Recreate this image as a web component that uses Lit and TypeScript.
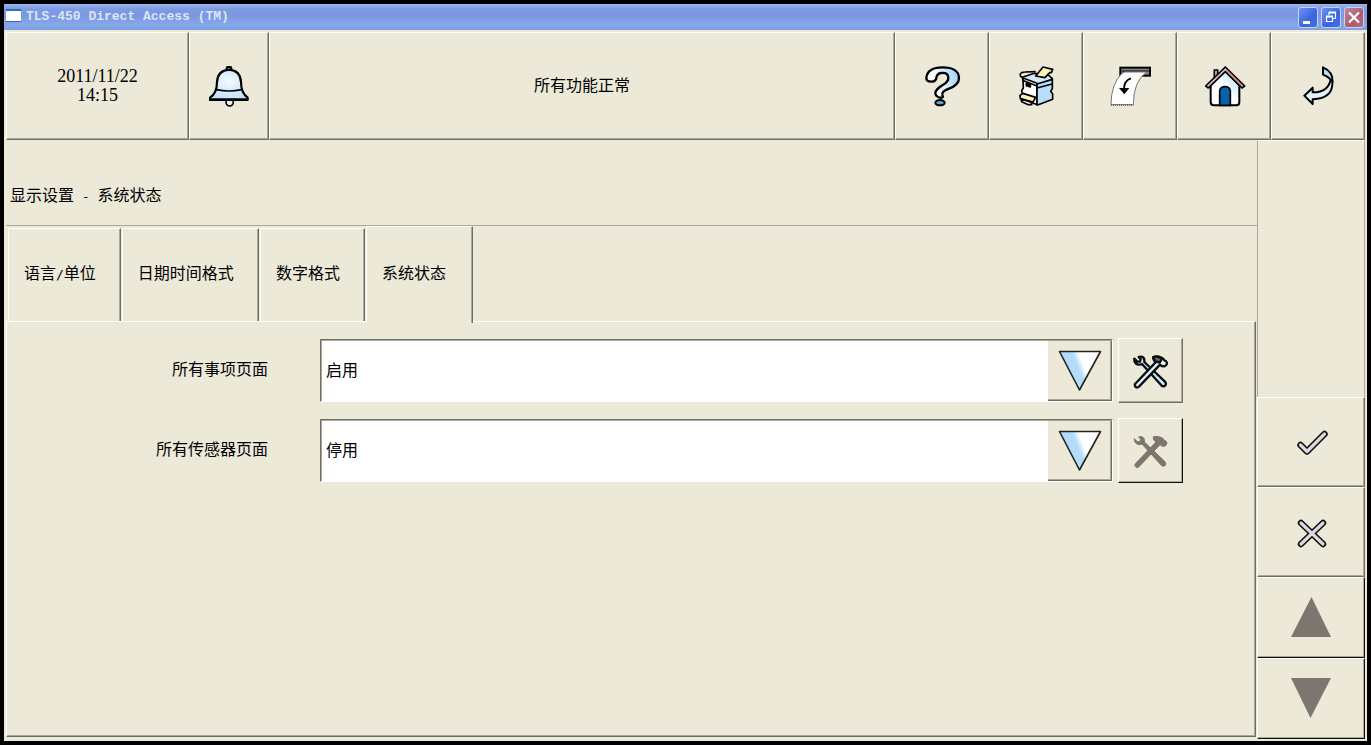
import { LitElement, html, css, svg } from "lit";
import { customElement, state } from "lit/decorators.js";

const bell = svg`<svg width="40" height="41" viewBox="0 0 120 123" aria-hidden="true">
  <defs><radialGradient id="bg" cx=".5" cy=".4" r=".6"><stop offset="0" stop-color="#f4faff"/><stop offset="1" stop-color="#c3e0fb"/></radialGradient></defs>
  <circle cx="62" cy="109" r="11" fill="#e3f1fd" stroke="#000" stroke-width="5"/>
  <rect x="53" y="3" width="14" height="14" rx="3" fill="#8bb" stroke="#000" stroke-width="6"/>
  <path d="M60 11C36 13 25 28 24 48C24 68 21 84 3 95V102H116V95C101 84 96 68 96 48C95 28 84 13 60 11Z" fill="url(#bg)" stroke="#000" stroke-width="6.500" stroke-linejoin="round"/>
  <path d="M22 71Q60 79 98 71" fill="none" stroke="#000" stroke-width="5"/>
  <path d="M2 101H117" stroke="#000" stroke-width="8"/></svg>`;

const help = svg`<svg width="36" height="41" viewBox="0 0 108 123" aria-hidden="true">
  <defs><linearGradient id="qg" x1="0" y1=".6" x2="1" y2=".3"><stop offset=".3" stop-color="#fff"/><stop offset="1" stop-color="#9dd2fb"/></linearGradient></defs>
  <path d="M4 36C6 14 26 4 53 4C84 4 102 16 102 36C102 54 88 62 72 68C56 74 51 80 52 86C53 91 56 94 50 95C42 96 31 90 31 82C31 72 40 66 52 58C66 50 71 44 70 34C69 24 60 20 49 21C37 22 35 28 34 36C33 43 26 47 18 47C9 47 4 43 4 36Z" fill="url(#qg)" stroke="#000" stroke-width="7" stroke-linejoin="round"/>
  <ellipse cx="45" cy="110" rx="14" ry="8" fill="#5aa3dc" stroke="#000" stroke-width="6"/></svg>`;

const printer = svg`<svg width="36" height="41" viewBox="0 0 108 123" aria-hidden="true">
  <g stroke="#000" stroke-width="5" stroke-linejoin="round">
  <path d="M10 34Q2 32 4 24Q7 18 18 18L50 17" fill="none"/>
  <path d="M10 34L46 22L88 27L100 38L96 50L54 58L12 44Z" fill="#d5ebfc"/>
  <path d="M12 36L54 52V116L14 98L8 74L13 66Z" fill="#fff"/>
  <path d="M54 54L100 40V68L95 76L101 84V100L58 116H54Z" fill="#b9defa"/>
  <path d="M54 66L99 54M14 44L54 60" fill="none"/>
  <path d="M50 30L72 3L101 10L97 20H92L78 35Z" fill="#fdf0b8"/>
  <path d="M3 88L12 82L50 94L42 108L4 98Z" fill="#fdf3b4"/>
  <path d="M6 99L38 109V116H28L8 107Z" fill="#fff"/>
  <path d="M22 52L34 56V63L22 59Z" fill="#000"/></g></svg>`;

const receipt = svg`<svg width="42" height="41" viewBox="0 0 126 123" aria-hidden="true">
  <rect x="31" y="5" width="89" height="24" fill="#85858c" stroke="#000" stroke-width="6"/>
  <path d="M36 15H116" stroke="#333" stroke-width="5"/>
  <path d="M34 24Q44 16 50 18H110Q70 46 70 116H3Q3 56 34 24Z" fill="#fff" stroke="#77756e" stroke-width="3"/>
  <path d="M3 117H70" stroke="#555" stroke-width="4" stroke-dasharray="3 3"/>
  <path d="M63 37C50 41 42 53 42 70" fill="none" stroke="#000" stroke-width="6"/>
  <path d="M27 66H58L43 85Z"/></svg>`;

const home = svg`<svg width="41" height="41" viewBox="0 0 123 123" aria-hidden="true">
  <defs><linearGradient id="hg" x1="0" y1="1" x2="1" y2="0"><stop offset=".5" stop-color="#fff"/><stop offset="1" stop-color="#a5d3f8"/></linearGradient></defs>
  <path d="M28 44V12H38V34" fill="#d9c6c8" stroke="#000" stroke-width="5"/>
  <path d="M17 58L61 14L103 58V108Q103 118 94 118H27Q17 118 17 108Z" fill="url(#hg)" stroke="#000" stroke-width="6"/>
  <path d="M44 118V74Q46 62 60 62Q74 62 76 74V118Z" fill="#0862a8" stroke="#000" stroke-width="5"/>
  <path d="M61 3L2 60L10 66L61 17L111 66L119 60Z" fill="#dcb7bc" stroke="#000" stroke-width="5" stroke-linejoin="round"/>
  <path d="M66 13L112 59" stroke="#c07a86" stroke-width="4"/></svg>`;

const back = svg`<svg width="32" height="41" viewBox="0 0 96 123" aria-hidden="true">
  <g stroke="#000" stroke-width="6" stroke-linejoin="round">
  <path d="M60 4Q92 18 88 48Q78 32 60 26Z" fill="#b9defa"/>
  <path d="M88 44Q92 98 29 100V114L4 89L29 65V79Q74 80 83 42Z" fill="#e2f0fc"/></g></svg>`;

const triangle = svg`<svg width="44" height="42" viewBox="0 0 44 42" aria-hidden="true">
  <defs><linearGradient id="tg" x1=".1" y1=".5" x2=".9" y2=".2"><stop offset=".42" stop-color="#b3dcfb"/><stop offset=".6" stop-color="#fff"/></linearGradient></defs>
  <path d="M1.500 1.500H42.500L21.500 40Z" fill="url(#tg)" stroke="#222" stroke-width="1.600" stroke-linejoin="round"/></svg>`;

const wrench = "M3 8Q2 20 12 25Q19 27 26 24L84 88Q90 94 96 88Q100 82 94 76L33 18Q35 4 24 2Q18 1 16 3L22 10L20 17L12 17Z";
const hammer = "M60 3Q72 -1 82 4Q90 6 93 13Q99 14 101 21Q101 28 93 31L85 30L80 26L17 92Q11 97 6 92Q2 86 8 81L69 17Q60 16 60 3Z";
const tools = (off: boolean) => svg`<svg width="35" height="34" viewBox="-1 -3 105 102" aria-hidden="true">
  <g stroke-linejoin="round" stroke-width="${off ? 3 : 7}" stroke="${off ? "#7b776f" : "#0a0f14"}">
  <path d="${wrench}" fill="${off ? "#7b776f" : "#d5eafb"}"/>
  <path d="${hammer}" fill="${off ? "#7b776f" : "#e4f1fc"}"/>
  <path d="M60 3Q74 -1 86 8L79 20L69 17Q60 14 60 3Z" fill="${off ? "#7b776f" : "#6a6862"}"/></g></svg>`;

const check = svg`<svg width="31" height="26" viewBox="0 0 31 26" aria-hidden="true"><g fill="none" stroke-linecap="round" stroke-linejoin="round">
  <path d="M3.500 15L10 21.500L27.500 4" stroke="#111" stroke-width="6.500"/><path d="M3.500 15L10 21.500L27.500 4" stroke="#d9dade" stroke-width="3.200"/></g></svg>`;
const cross = svg`<svg width="30" height="29" viewBox="0 0 30 29" aria-hidden="true"><g fill="none" stroke-linecap="round">
  <path d="M4 4L26 25M26 4L4 25" stroke="#111" stroke-width="6.500"/><path d="M4 4L26 25M26 4L4 25" stroke="#d9dade" stroke-width="3.200"/></g></svg>`;
const up = svg`<svg width="40" height="40" viewBox="0 0 40 40" aria-hidden="true"><path d="M20.500 0L40 40H0Z" fill="#7b776f"/></svg>`;
const down = svg`<svg width="40" height="40" viewBox="0 0 40 40" aria-hidden="true"><path d="M0 0H40L19.500 40Z" fill="#7b776f"/></svg>`;

@customElement("app-root")
export class AppRoot extends LitElement {
  @state() private tab = 3;

  static styles = css`
    :host {
      display: block;
      --face: #ece9d8;
      --mid: #aca899;
      --dark: #716f64;
      font: 16px/24px "Noto Sans CJK SC", sans-serif;
      color: #000;
    }
    * { box-sizing: border-box; }
    button, select { font: inherit; color: inherit; margin: 0; padding: 0; border-radius: 0; background: var(--face); }
    svg { display: block; }
    .window { display: flex; flex-direction: column; height: 100vh; border: 4px solid #000; background: var(--face); }
    .title {
      display: flex; align-items: center; height: 26px; padding: 0 3px 0 2px;
      background: linear-gradient(#9ab8ee, #7d9ae2 20%, #7b97e0 45%, #86a8e8 80%, #7f9fe4);
      color: #dbe5fb;
    }
    .title h1 { flex: 1; margin: 0 0 0 5px; font: bold 13px/16px "Liberation Mono", monospace; white-space: pre; }
    .appicon { width: 15px; height: 13px; margin-bottom: 3px; background: #fff; border: solid #2a6fc0; border-width: 2px 0 1px; }
    .wbtns { display: flex; gap: 3px; }
    .wbtn { width: 20px; height: 21px; border: 1px solid #c4d3f6; border-radius: 3px; background: linear-gradient(135deg, #6f92ee, #3a64dc 60%, #4470e4); }
    .wbtn.close { background: linear-gradient(135deg, #c08a9c, #ad5c6c 60%, #b56a78); }
    .body { flex: 1; min-height: 0; display: flex; flex-direction: column; padding: 2px; }
    .toolbar { display: flex; height: 108px; flex: none; }
    .cell, .tool, .act {
      display: flex; align-items: center; justify-content: center; text-align: center;
      border: 1px solid; border-color: #fff var(--dark) var(--dark) #fff;
      box-shadow: inset -1px -1px var(--mid);
    }
    .date { width: 183px; font: 18px/19px "Liberation Serif", serif; }
    .alarm { width: 80px; }
    .status { flex: 1; padding-bottom: 4px; }
    .nav { width: 94px; padding-left: 2px; }
    .main { flex: 1; min-height: 0; display: grid; grid-template-columns: 1fr 108px; }
    .left { display: flex; flex-direction: column; min-width: 0; padding-bottom: 2px; }
    .heading { margin: 0; height: 86px; padding: 42px 0 0 4px; font-size: 16px; font-weight: inherit; border-bottom: 1px solid var(--mid); }
    .half { font: 13px/16px "DejaVu Sans Mono", monospace; white-space: pre; }
    .tabs { display: flex; gap: 1px; height: 95px; padding-left: 2px; }
    .tab {
      margin-top: 2px; padding: 0 24px 6px 15px; white-space: nowrap;
      border: solid; border-width: 1px 1px 0 1px; border-color: #fff var(--dark) #fff #fff;
      box-shadow: inset -1px 0 var(--mid);
    }
    .tab.on { margin: 0 0 -2px; padding: 0 26px 6px 15px; z-index: 1; }
    .panel {
      flex: 1; margin-right: 1px; padding: 16px 72px 0 0;
      border: 1px solid; border-color: #fff var(--dark) var(--dark) #fff;
      box-shadow: inset -1px -1px var(--mid);
      display: flex; flex-direction: column; gap: 15px;
    }
    .row { display: grid; grid-template-columns: 261px 1fr 65px; align-items: center; height: 65px; }
    .row label { text-align: right; padding-bottom: 5px; }
    .combo { display: grid; margin: 0 5px 0 52px; }
    .combo > * { grid-area: 1 / 1; }
    .combo select {
      appearance: none; width: 100%; height: 63px; background: #fff; padding: 0 70px 4px 5px; outline: none;
      border: 1px solid; border-color: var(--dark) #fff #fff var(--dark);
      box-shadow: inset 1px 1px var(--mid);
    }
    .drop {
      justify-self: end; width: 64px; margin: 2px 1px 1px 0; pointer-events: none; background: var(--face);
      display: flex; justify-content: center; align-items: flex-start; padding: 9px 0 0 1px;
      border: solid; border-width: 0 1px 1px 0; border-color: var(--dark);
      box-shadow: inset -1px -1px var(--mid);
    }
    .tool { height: 65px; padding-top: 2px; }
    .tool:disabled { border-right-color: #111; border-bottom-color: #111; }
    .side { display: flex; flex-direction: column; }
    .blank { flex: 1; border: solid; border-width: 1px 1px 0 1px; border-color: #fff var(--mid) #fff var(--mid); }
    .act { height: 90px; padding: 2px 0 0 2px; }
    .scroll { height: 81px; padding: 0 0 2px; border-color: #fff #111 #111 #fff; }
  `;

  private row(id: string, label: string, value: string, off: boolean) {
    return html`<div class="row">
      <label for=${id}>${label}</label>
      <div class="combo">
        <select id=${id}>
          <option ?selected=${value === "启用"}>启用</option>
          <option ?selected=${value === "停用"}>停用</option>
        </select>
        <span class="drop">${triangle}</span>
      </div>
      <button class="tool" aria-label="${label}设置" ?disabled=${off}>${tools(off)}</button>
    </div>`;
  }

  render() {
    const tabs = [
      html`语言<span class="half">/</span>单位`,
      "日期时间格式",
      "数字格式",
      "系统状态",
    ];
    return html`<div class="window">
      <header class="title">
        <span class="appicon"></span>
        <h1>TLS-450 Direct Access (TM)</h1>
        <div class="wbtns">
          <button class="wbtn" aria-label="最小化"><svg width="18" height="19"><path d="M4 13h7v3H4z" fill="#fff"/></svg></button>
          <button class="wbtn" aria-label="还原"><svg width="18" height="19"><path d="M7 7V4.500h6.500v6H11M4.500 8.500h6v5h-6z" fill="none" stroke="#fff" stroke-width="1.200"/><path d="M4 8.500h7M7 4.500h7" stroke="#fff" stroke-width="2"/></svg></button>
          <button class="wbtn close" aria-label="关闭"><svg width="18" height="19"><path d="M4 4.500L14 14.500M14 4.500L4 14.500" stroke="#fff" stroke-width="2.200"/></svg></button>
        </div>
      </header>
      <div class="body">
        <nav class="toolbar">
          <div class="cell date">2011/11/22<br>14:15</div>
          <button class="cell alarm" aria-label="警报">${bell}</button>
          <div class="cell status">所有功能正常</div>
          <button class="cell nav" aria-label="帮助">${help}</button>
          <button class="cell nav" aria-label="打印机">${printer}</button>
          <button class="cell nav" aria-label="走纸">${receipt}</button>
          <button class="cell nav" aria-label="主页">${home}</button>
          <button class="cell nav" aria-label="返回">${back}</button>
        </nav>
        <main class="main">
          <section class="left">
            <h2 class="heading">显示设置<span class="half"> - </span>系统状态</h2>
            <div class="tabs" role="tablist">
              ${tabs.map((t, i) => html`<button role="tab" class="tab ${i === this.tab ? "on" : ""}"
                aria-selected=${i === this.tab} @click=${() => (this.tab = i)}>${t}</button>`)}
            </div>
            <div class="panel" role="tabpanel">
              ${this.row("all-items", "所有事项页面", "启用", false)}
              ${this.row("all-sensors", "所有传感器页面", "停用", true)}
            </div>
          </section>
          <aside class="side">
            <div class="blank"></div>
            <button class="act" aria-label="确认">${check}</button>
            <button class="act" aria-label="取消">${cross}</button>
            <button class="act scroll" aria-label="向上" disabled>${up}</button>
            <button class="act scroll" aria-label="向下" disabled>${down}</button>
          </aside>
        </main>
      </div>
    </div>`;
  }
}
